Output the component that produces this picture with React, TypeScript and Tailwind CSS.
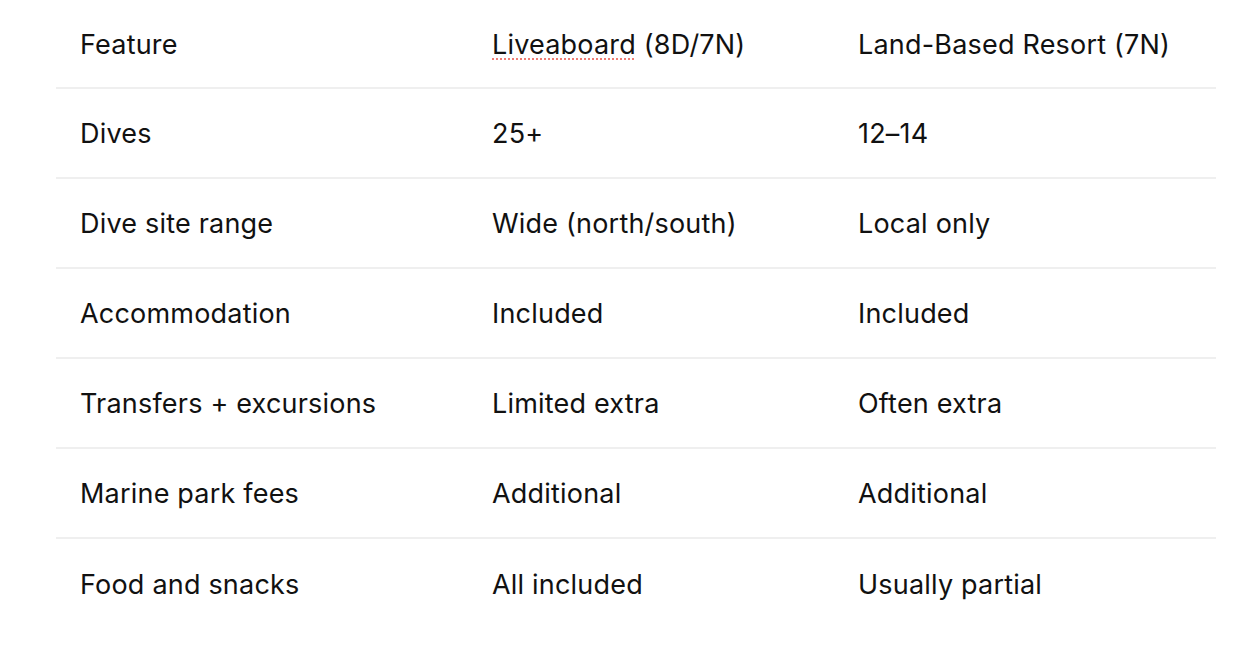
import React from "react";

const rows: [string, string, string][] = [
  ["Dives", "25+", "12–14"],
  ["Dive site range", "Wide (north/south)", "Local only"],
  ["Accommodation", "Included", "Included"],
  ["Transfers + excursions", "Limited extra", "Often extra"],
  ["Marine park fees", "Additional", "Additional"],
  ["Food and snacks", "All included", "Usually partial"],
];

export default function App() {
  return (
    <div
      className="w-[1240px] h-[650px] bg-white overflow-hidden text-[#111111]"
      style={{ fontFamily: "Inter, 'Noto Sans', sans-serif" }}
    >
      <div className="ml-[56px] w-[1160px] flex flex-col">
        <div className="grid grid-cols-[412px_366px_382px] h-[89px] pt-[3px] border-b-2 border-[#efefef] items-center text-[27px] tracking-[0.2px]">
          <div className="pl-[24px]">Feature</div>
          <div className="pl-[24px]">
            <span className="underline decoration-dotted decoration-[#ef7d74] decoration-2 underline-offset-[5px]">
              Liveaboard
            </span>{" "}
            (8D/7N)
          </div>
          <div className="pl-[24px]">Land-Based Resort (7N)</div>
        </div>
        {rows.map((r, i) => (
          <div
            key={i}
            className={`grid grid-cols-[412px_366px_382px] h-[90px] pt-[3px] items-center text-[27px] tracking-[0.2px] ${
              i < rows.length - 1 ? "border-b-2 border-[#efefef]" : ""
            }`}
          >
            <div className="pl-[24px]">{r[0]}</div>
            <div className="pl-[24px]">{r[1]}</div>
            <div className="pl-[24px]">{r[2]}</div>
          </div>
        ))}
      </div>
    </div>
  );
}
